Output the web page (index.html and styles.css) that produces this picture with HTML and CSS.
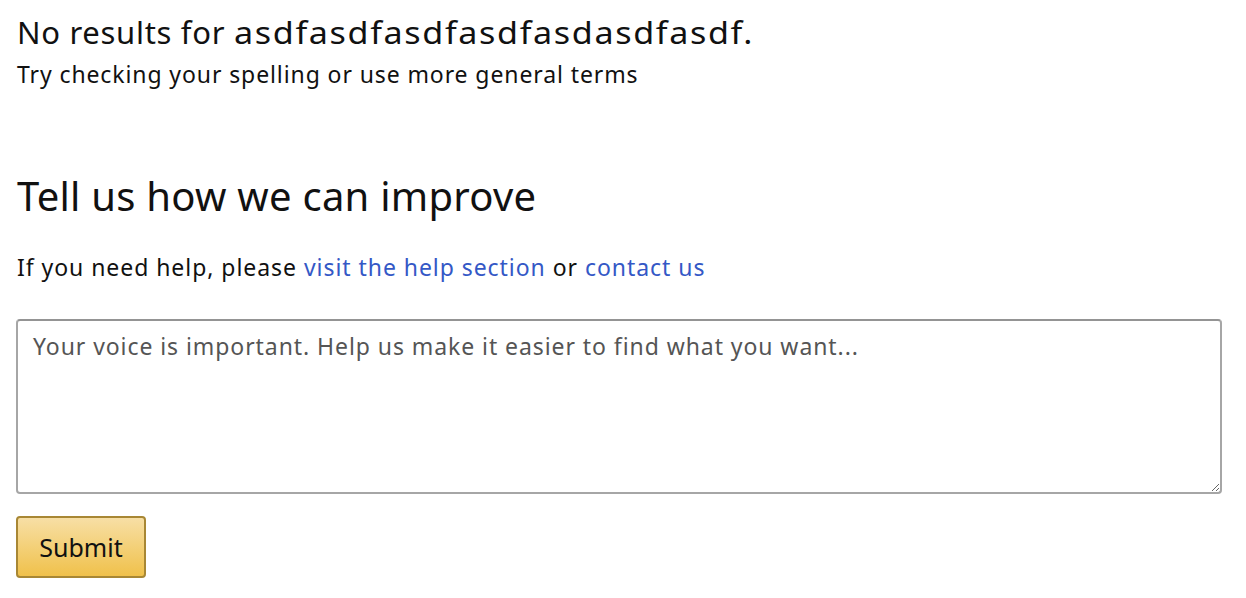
FILE: index.html
```html
<!DOCTYPE html>
<html>
<head>
<meta charset="utf-8">
<link rel="stylesheet" href="styles.css">
</head>
<body>
<div class="page">
  <div class="no-results">
    <div class="nr-title">No results for <span class="nr-query">asdfasdfasdfasdfasdasdfasdf.</span></div>
    <div class="nr-sub">Try checking your spelling or use more general terms</div>
  </div>
  <div class="feedback">
    <h2 class="fb-title">Tell us how we can improve</h2>
    <p class="fb-help">If you need help, please <a href="#">visit the help section</a> or <a href="#">contact us</a></p>
    <textarea class="fb-input" placeholder="Your voice is important. Help us make it easier to find what you want..."></textarea>
    <button class="fb-submit">Submit</button>
  </div>
</div>
</body>
</html>
```
FILE: styles.css
```css
html, body {
  margin: 0;
  padding: 0;
  background: #fff;
}
.page {
  font-family: "Noto Sans", "Open Sans", sans-serif;
  color: #111;
  padding: 10px 24px 0 16px;
}
.no-results {
  display: flex;
  flex-direction: column;
}
.nr-title {
  font-size: 31px;
  line-height: 44px;
  letter-spacing: 0.7px;
  padding-left: 1px;
  white-space: nowrap;
}
.nr-query {
  display: inline-block;
  letter-spacing: 1.5px;
  transform: scaleX(1.1);
  transform-origin: left center;
}
.nr-sub {
  font-size: 23px;
  line-height: 26px;
  letter-spacing: 0.9px;
  margin-top: 7px;
  padding-left: 1px;
}
.feedback {
  display: flex;
  flex-direction: column;
  align-items: flex-start;
  margin-top: 83px;
}
.fb-title {
  font-size: 40px;
  font-weight: 400;
  line-height: 52px;
  letter-spacing: 0.25px;
  margin: 0;
  padding-left: 1px;
}
.fb-help {
  font-size: 23px;
  line-height: 30px;
  letter-spacing: 0.95px;
  margin: 30px 0 0 0;
  padding-left: 1px;
}
.fb-help a {
  color: #3458c6;
  text-decoration: none;
}
.fb-input {
  box-sizing: border-box;
  width: 1206px;
  height: 175px;
  margin-top: 37px;
  border: 2px solid #a6a6a6;
  border-top-color: #949494;
  border-radius: 4px;
  padding: 10px 15px;
  font-family: "Noto Sans", "Open Sans", sans-serif;
  font-size: 23px;
  line-height: 30px;
  letter-spacing: 0.93px;
  color: #111;
  resize: vertical;
}
.fb-input::placeholder {
  color: #555;
}
.fb-submit {
  margin-top: 22px;
  width: 130px;
  height: 62px;
  padding: 0;
  border: 2px solid #a88734;
  border-radius: 4px;
  background: linear-gradient(to bottom, #f7dfa5, #f0c14b);
  font-family: "Noto Sans", "Open Sans", sans-serif;
  font-size: 25px;
  color: #111;
  cursor: pointer;
}
```
